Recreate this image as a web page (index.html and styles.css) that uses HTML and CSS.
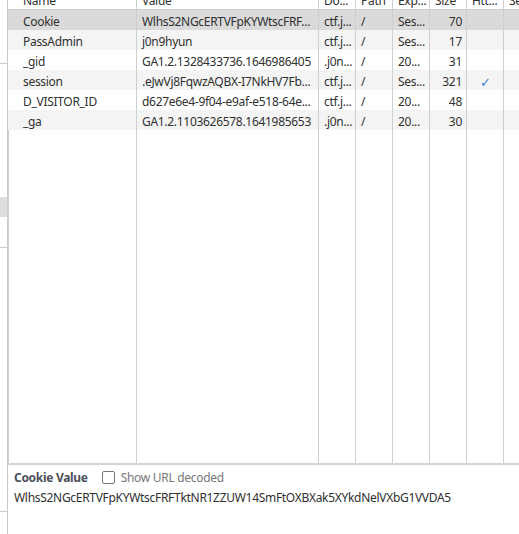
FILE: index.html
```html
<!DOCTYPE html>
<html>
<head>
<meta charset="utf-8">
<link rel="stylesheet" href="styles.css">
</head>
<body>
<div class="app">
  <div class="strip">
    <div class="strip-line l1"></div>
    <div class="strip-sel"></div>
    <div class="strip-line l2"></div>
    <div class="strip-line l3"></div>
  </div>
  <div class="main">
    <div class="grid">
      <div class="row head">
        <div class="c name">Name</div><div class="c">Value</div><div class="c">Do...</div><div class="c">Path</div><div class="c">Exp...</div><div class="c">Size</div><div class="c">Htt...</div><div class="c">Se</div>
      </div>
      <div class="row sel">
        <div class="c name">Cookie</div><div class="c">WlhsS2NGcERTVFpKYWtscFRF...</div><div class="c">ctf.j...</div><div class="c">/</div><div class="c">Ses...</div><div class="c num">70</div><div class="c"></div><div class="c"></div>
      </div>
      <div class="row alt">
        <div class="c name">PassAdmin</div><div class="c">j0n9hyun</div><div class="c">ctf.j...</div><div class="c">/</div><div class="c">Ses...</div><div class="c num">17</div><div class="c"></div><div class="c"></div>
      </div>
      <div class="row">
        <div class="c name">_gid</div><div class="c">GA1.2.1328433736.1646986405</div><div class="c">.j0n...</div><div class="c">/</div><div class="c">20...</div><div class="c num">31</div><div class="c"></div><div class="c"></div>
      </div>
      <div class="row alt">
        <div class="c name">session</div><div class="c">.eJwVj8FqwzAQBX-I7NkHV7Fb...</div><div class="c">ctf.j...</div><div class="c">/</div><div class="c">Ses...</div><div class="c num">321</div><div class="c check">✓</div><div class="c"></div>
      </div>
      <div class="row">
        <div class="c name">D_VISITOR_ID</div><div class="c">d627e6e4-9f04-e9af-e518-64e...</div><div class="c">ctf.j...</div><div class="c">/</div><div class="c">20...</div><div class="c num">48</div><div class="c"></div><div class="c"></div>
      </div>
      <div class="row alt">
        <div class="c name">_ga</div><div class="c">GA1.2.1103626578.1641985653</div><div class="c">.j0n...</div><div class="c">/</div><div class="c">20...</div><div class="c num">30</div><div class="c"></div><div class="c"></div>
      </div>
      <div class="row filler">
        <div class="c"></div><div class="c"></div><div class="c"></div><div class="c"></div><div class="c"></div><div class="c"></div><div class="c"></div><div class="c"></div>
      </div>
    </div>
    <div class="detail">
      <div class="detail-head">
        <span class="detail-title">Cookie Value</span>
        <label class="decode"><span class="box"></span>Show URL decoded</label>
      </div>
      <div class="detail-value">WlhsS2NGcERTVFpKYWtscFRFTktNR1ZZUW14SmFtOXBXak5XYkdNelVXbG1VVDA5</div>
    </div>
  </div>
</div>
</body>
</html>
```

FILE: styles.css
```css
html, body {
  margin: 0;
  padding: 0;
  background: #fff;
  overflow: hidden;
}
body {
  font-family: "Noto Sans", "Open Sans", sans-serif;
  font-size: 12px;
  letter-spacing: -0.3px;
  color: #303030;
}
.app {
  display: flex;
  height: 534px;
}
.strip {
  width: 7px;
  border-right: 1px solid #cbcbcb;
  display: flex;
  flex-direction: column;
  flex-shrink: 0;
}
.strip-line {
  height: 1px;
  background: #cbcbcb;
}
.l1 { margin-top: 63px; }
.strip-sel { margin-top: 133px; height: 20px; background: #dedede; }
.l2 { margin-top: 30px; }
.l3 { margin-top: 263px; }
.main {
  flex: 1;
  display: flex;
  flex-direction: column;
  min-width: 0;
  overflow: hidden;
}
.grid {
  margin-top: -11px;
  border-bottom: 2px solid #d4d4d4;
}
.row {
  display: grid;
  grid-template-columns: 128px 182px 37px 37px 37px 37px 37px 1fr;
  height: 20px;
  white-space: nowrap;
}
.row.head {
  height: 20px;
  border-bottom: 1px solid #cfcfcf;
}
.row.sel { background: #dadada; }
.row.alt { background: #f4f4f4; }
.row.filler { height: 333px; }
.c {
  border-left: 1px solid #cfcfcf;
  padding: 0 4px 0 5px;
  line-height: 24px;
  overflow: hidden;
}
.c.name {
  border-left: none;
  padding-left: 15px;
}
.c.num { text-align: right; }
.c.check {
  color: #3b7fd6;
  text-align: center;
  font-size: 13px;
}
.detail {
  flex: 1;
  padding: 4px 6px;
}
.detail-head {
  display: flex;
  align-items: center;
  height: 17px;
}
.detail-title {
  font-weight: bold;
  color: #4a4f5a;
  margin-right: 14px;
}
.decode {
  display: flex;
  align-items: center;
  color: #777;
}
.box {
  width: 11px;
  height: 11px;
  border: 1px solid #767676;
  border-radius: 2px;
  margin-right: 6px;
}
.detail-value {
  margin-top: 3px;
  line-height: 18px;
  color: #303030;
}
```
